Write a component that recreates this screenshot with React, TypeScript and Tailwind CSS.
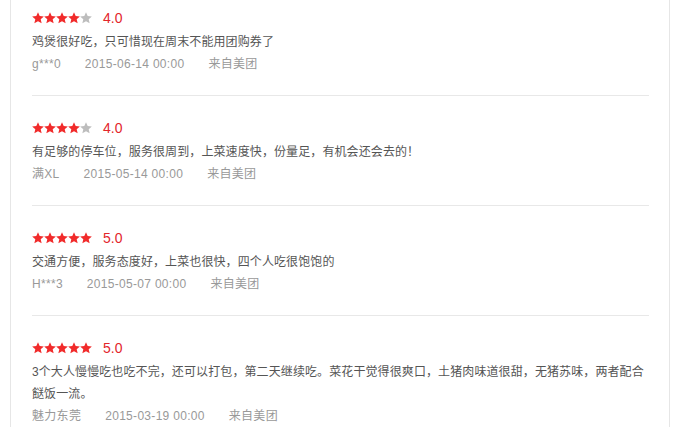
const reviews = [
  { score: 4, text: "鸡煲很好吃，只可惜现在周末不能用团购券了", user: "g***0", date: "2015-06-14 00:00" },
  { score: 4, text: "有足够的停车位，服务很周到，上菜速度快，份量足，有机会还会去的！", user: "满XL", date: "2015-05-14 00:00" },
  { score: 5, text: "交通方便，服务态度好，上菜也很快，四个人吃很饱饱的", user: "H***3", date: "2015-05-07 00:00" },
  {
    score: 5,
    text: "3个大人慢慢吃也吃不完，还可以打包，第二天继续吃。菜花干觉得很爽口，土猪肉味道很甜，无猪苏味，两者配合餸饭一流。",
    user: "魅力东莞",
    date: "2015-03-19 00:00",
  },
];

function Star({ on }: { on: boolean }) {
  return (
    <svg viewBox="0 0 24 24" className="h-[12px] w-[12px]" aria-hidden>
      <path
        d="M12 0.5l3.4 7.6 8.3.8-6.3 5.6 1.9 8.2L12 18.4l-7.3 4.3 1.9-8.2L.3 8.9l8.3-.8z"
        fill={on ? "#f12b2b" : "#bdbdbd"}
      />
    </svg>
  );
}

export default function App() {
  return (
    <div className="min-h-[427px] bg-white font-['Liberation_Sans','Noto_Sans_CJK_SC',sans-serif]">
      <div className="ml-[10px] min-h-[427px] w-[660px] border-x border-[#e6e6e6] pl-[21px] pr-[20px]">
        {reviews.map((r, i) => (
          <div
            key={r.date}
            className={`border-b border-[#e8e8e8] pb-[20px] ${i === 0 ? "pt-[8px]" : "pt-[22px]"} ${
              i === reviews.length - 1 ? "border-b-0" : ""
            }`}
          >
            <div className="flex h-[20px] items-center">
              <div className="flex">
                {Array.from({ length: 5 }).map((_, k) => (
                  <Star key={k} on={k < r.score} />
                ))}
              </div>
              <span className="ml-[11px] text-[14px] leading-[20px] text-[#e3262b]">{r.score}.0</span>
            </div>
            <p className="mt-[3px] text-[12px] leading-[22px] tracking-[0.1px] text-[#555]">{r.text}</p>
            <div className="flex text-[12px] leading-[22px] tracking-[0.3px] text-[#999]">
              <span className="mr-6">{r.user}</span>
              <span className="mr-6">{r.date}</span>
              <span>来自美团</span>
            </div>
          </div>
        ))}
      </div>
    </div>
  );
}
